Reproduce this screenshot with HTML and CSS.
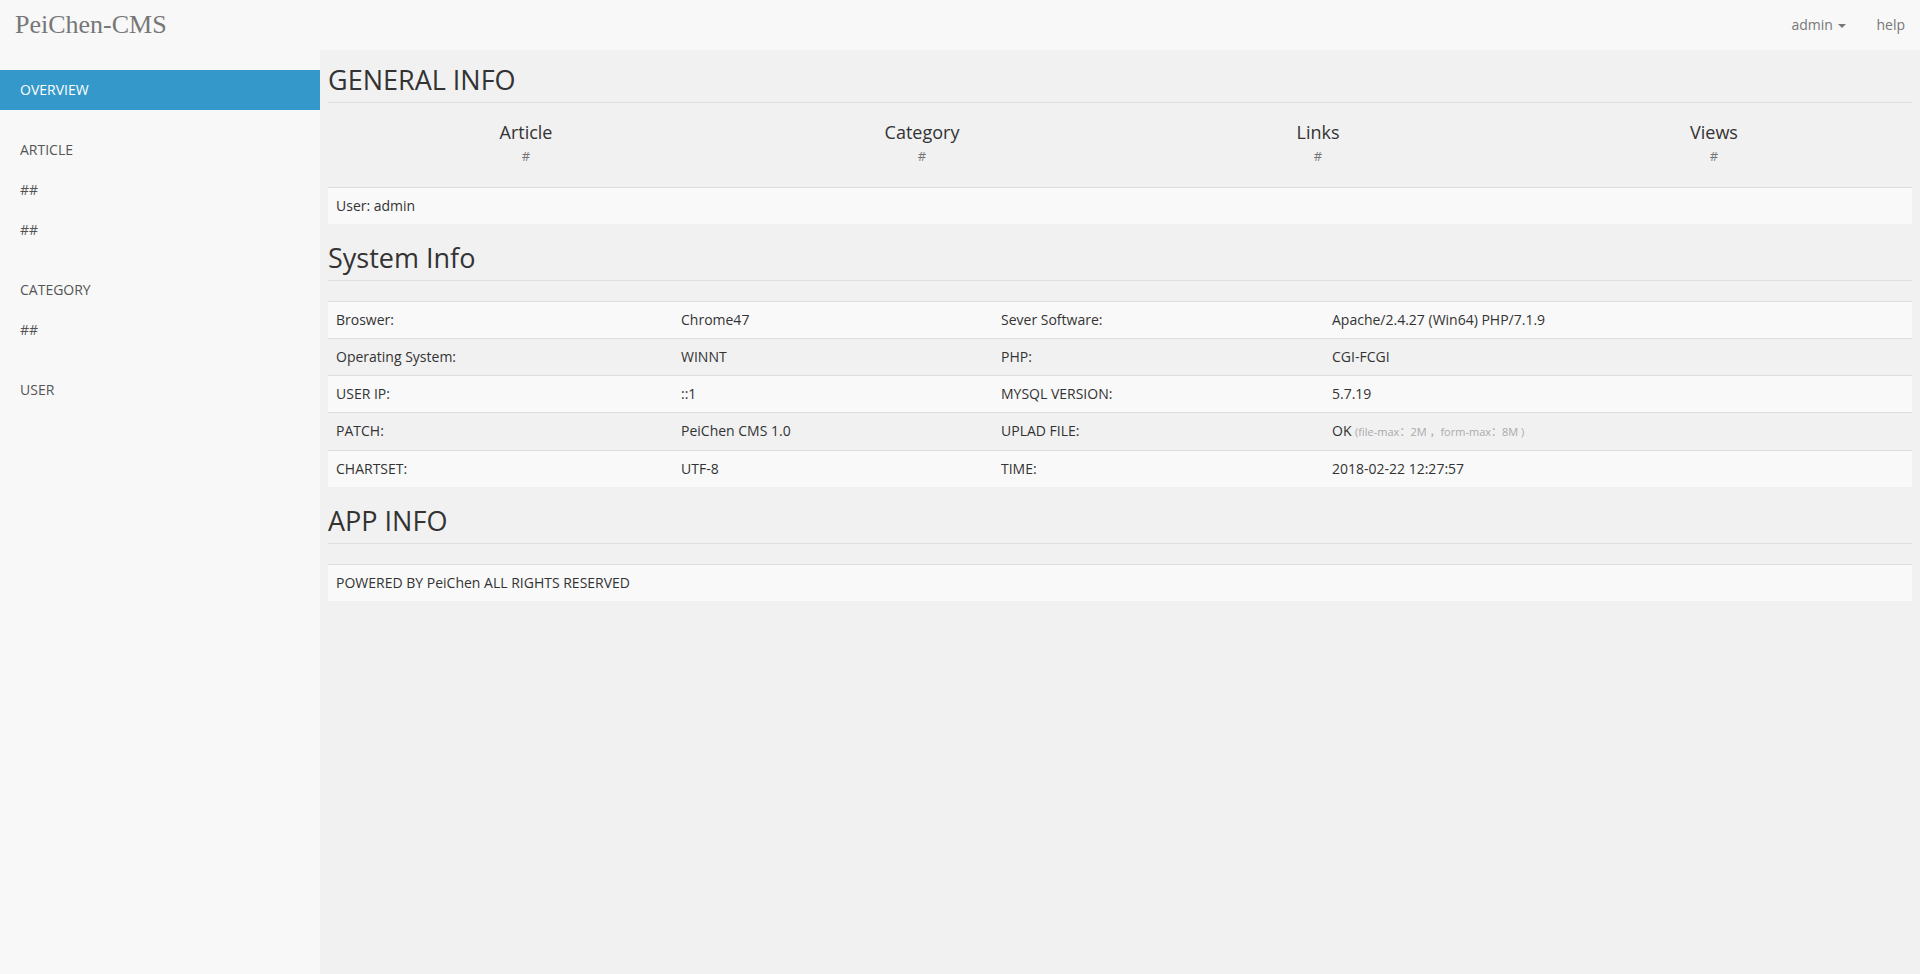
FILE: index.html
```html
<!DOCTYPE html>
<html lang="en">
<head>
<meta charset="utf-8">
<title>PeiChen-CMS</title>
<link rel="stylesheet" href="styles.css">
</head>
<body>
<nav class="navbar">
  <a class="brand" href="#">PeiChen-CMS</a>
  <ul class="navbar-right">
    <li><a href="#">admin <span class="caret"></span></a></li>
    <li><a href="#">help</a></li>
  </ul>
</nav>
<div class="layout">
  <aside class="sidebar">
    <ul class="nav-sidebar">
      <li class="active"><a href="#">OVERVIEW</a></li>
    </ul>
    <ul class="nav-sidebar">
      <li><a href="#">ARTICLE</a></li>
      <li><a href="#">##</a></li>
      <li><a href="#">##</a></li>
    </ul>
    <ul class="nav-sidebar">
      <li><a href="#">CATEGORY</a></li>
      <li><a href="#">##</a></li>
    </ul>
    <ul class="nav-sidebar">
      <li><a href="#">USER</a></li>
    </ul>
  </aside>
  <main class="main">
    <h2 class="page-header">GENERAL INFO</h2>
    <div class="placeholders">
      <div class="placeholder"><h4>Article</h4><span class="text-muted">#</span></div>
      <div class="placeholder"><h4>Category</h4><span class="text-muted">#</span></div>
      <div class="placeholder"><h4>Links</h4><span class="text-muted">#</span></div>
      <div class="placeholder"><h4>Views</h4><span class="text-muted">#</span></div>
    </div>
    <table class="table">
      <tbody>
        <tr><td>User: admin</td></tr>
      </tbody>
    </table>

    <h2 class="page-header">System Info</h2>
    <table class="table sys">
      <colgroup>
        <col class="c1"><col class="c2"><col class="c3"><col class="c4">
      </colgroup>
      <tbody>
        <tr><td>Broswer:</td><td>Chrome47</td><td>Sever Software:</td><td>Apache/2.4.27 (Win64) PHP/7.1.9</td></tr>
        <tr><td>Operating System:</td><td>WINNT</td><td>PHP:</td><td>CGI-FCGI</td></tr>
        <tr><td>USER IP:</td><td>::1</td><td>MYSQL VERSION:</td><td>5.7.19</td></tr>
        <tr><td>PATCH:</td><td>PeiChen CMS 1.0</td><td>UPLAD FILE:</td><td>OK <span class="limit">(file-max：2M ，form-max：8M )</span></td></tr>
        <tr><td>CHARTSET:</td><td>UTF-8</td><td>TIME:</td><td>2018-02-22 12:27:57</td></tr>
      </tbody>
    </table>

    <h2 class="page-header">APP INFO</h2>
    <table class="table">
      <tbody>
        <tr><td>POWERED BY PeiChen ALL RIGHTS RESERVED</td></tr>
      </tbody>
    </table>
  </main>
</div>
</body>
</html>
```
FILE: styles.css
```css
* { box-sizing: border-box; }
html, body { margin: 0; padding: 0; }
body {
  font-family: "Open Sans", "Noto Sans CJK SC", sans-serif;
  font-size: 14px;
  line-height: 20px;
  color: #333;
  background: #f1f1f1;
}
a { text-decoration: none; }

.navbar {
  height: 50px;
  background: #f8f8f8;
  display: flex;
  justify-content: space-between;
  align-items: stretch;
  padding: 0 0 0 15px;
}
.brand {
  font-family: "Liberation Serif", "Times New Roman", serif;
  font-size: 26px;
  line-height: 50px;
  color: #777;
}
.navbar-right {
  list-style: none;
  margin: 0;
  padding: 0;
  display: flex;
}
.navbar-right a {
  display: block;
  padding: 15px;
  line-height: 20px;
  color: #777;
}
.caret {
  display: inline-block;
  width: 0;
  height: 0;
  margin-left: 2px;
  vertical-align: middle;
  border-top: 4px solid #777;
  border-right: 4px solid transparent;
  border-left: 4px solid transparent;
}

.layout {
  display: flex;
  min-height: calc(100vh - 50px);
}
.sidebar {
  width: 320px;
  flex: 0 0 320px;
  background: #f8f8f8;
  padding-top: 20px;
}
.nav-sidebar {
  list-style: none;
  margin: 0 0 20px;
  padding: 0;
}
.nav-sidebar a {
  display: block;
  padding: 10px 20px;
  line-height: 20px;
  color: #555;
}
.nav-sidebar .active a {
  background: #3498cb;
  color: #fff;
}

.main {
  flex: 1;
  min-width: 0;
  padding: 16px 8px 0;
  background: #f1f1f1;
}
.page-header {
  margin: 0 0 20px;
  padding-bottom: 9px;
  font-size: 27px;
  line-height: 27px;
  font-weight: 400;
  color: #333;
  border-bottom: 1px solid #dedede;
}
.placeholders {
  display: grid;
  grid-template-columns: repeat(4, 1fr);
  text-align: center;
  padding-bottom: 21px;
}
.placeholder h4 {
  margin: 0 0 3px;
  font-size: 18px;
  line-height: 1.1;
  font-weight: 400;
  color: #333;
}
.text-muted {
  display: block;
  color: #777;
  font-size: 13px;
  line-height: 20px;
}

.table {
  width: 100%;
  border-collapse: collapse;
  border-spacing: 0;
  margin-bottom: 20px;
}
.table td {
  padding: 8px;
  line-height: 20px;
  border-top: 1px solid #dddddd;
  vertical-align: top;
  text-align: left;
}
.table tr:nth-child(odd) td { background: #f9f9f9; }
.sys { table-layout: fixed; }
.sys .c1 { width: 345px; }
.sys .c2 { width: 320px; }
.sys .c3 { width: 331px; }
.limit {
  font-size: 11px;
  color: #aaa;
}
```
